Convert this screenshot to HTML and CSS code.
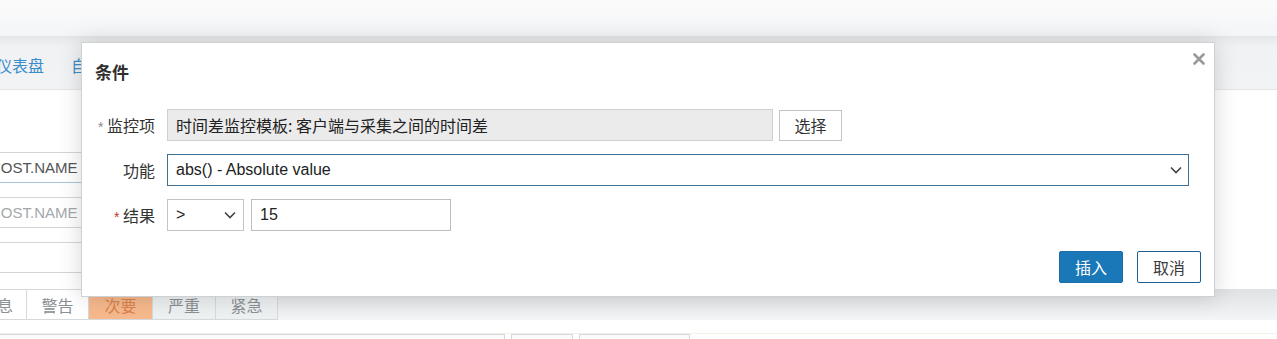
FILE: index.html
```html
<!DOCTYPE html>
<html lang="zh-CN">
<head>
<meta charset="utf-8">
<title>条件</title>
<link rel="stylesheet" href="styles.css">
</head>
<body>
<div class="page">
  <div class="topbar"></div>
  <nav class="nav">
    <a class="nav-link first">仪表盘</a>
    <a class="nav-link second">自</a>
  </nav>
  <main class="content">
    <div class="bg-field dark">HOST.NAME</div>
    <div class="bg-field light">HOST.NAME</div>
    <div class="bg-field"></div>
    <div class="tabs">
      <span class="tab t-info">信息</span>
      <span class="tab t-warn">警告</span>
      <span class="tab t-avg">次要</span>
      <span class="tab t-high">严重</span>
      <span class="tab t-dis">紧急</span>
      <span class="tab-rest"></span>
    </div>
    <div class="bottom-row">
      <span class="box b1"></span>
      <span class="box b2"></span>
      <span class="box b3"></span>
    </div>
  </main>
</div>

<div class="dialog">
  <div class="dialog-head">
    <h2 class="dialog-title">条件</h2>
    <span class="close">
      <svg width="12" height="12" viewBox="0 0 12 12"><path d="M1.5 1.5 L10.5 10.5 M10.5 1.5 L1.5 10.5" stroke="#9a9a9a" stroke-width="2.6" stroke-linecap="round"/></svg>
    </span>
  </div>
  <div class="form">
    <div class="row">
      <label class="lbl"><span class="ast grey">*</span> 监控项</label>
      <div class="ctl item-input">时间差监控模板: 客户端与采集之间的时间差</div>
      <button class="btn-sel">选择</button>
    </div>
    <div class="row">
      <label class="lbl">功能</label>
      <div class="ctl select func">
        <span class="latin">abs() - Absolute value</span>
        <svg class="chev" width="12" height="8" viewBox="0 0 12 8"><path d="M1 1.5 L6 6.5 L11 1.5" fill="none" stroke="#444" stroke-width="1.6"/></svg>
      </div>
    </div>
    <div class="row">
      <label class="lbl"><span class="ast red">*</span> 结果</label>
      <div class="ctl select op">
        <span class="latin">&gt;</span>
        <svg class="chev" width="12" height="8" viewBox="0 0 12 8"><path d="M1 1.5 L6 6.5 L11 1.5" fill="none" stroke="#444" stroke-width="1.6"/></svg>
      </div>
      <div class="ctl val"><span class="latin">15</span></div>
    </div>
  </div>
  <div class="footer">
    <button class="btn primary">插入</button>
    <button class="btn secondary">取消</button>
  </div>
</div>
</body>
</html>
```
FILE: styles.css
```css
html, body {
  margin: 0;
  padding: 0;
}
body {
  width: 1277px;
  height: 339px;
  overflow: hidden;
  position: relative;
  background: #ffffff;
  font-family: "Liberation Sans", "Noto Sans CJK SC", sans-serif;
  color: #333;
}

/* ---------- background page ---------- */
.page {
  width: 1277px;
  height: 339px;
  overflow: hidden;
  display: flex;
  flex-direction: column;
}
.topbar {
  height: 36px;
  flex: none;
  background: linear-gradient(#fbfbfc, #f4f5f6);
}
.nav {
  height: 54px;
  flex: none;
  background: linear-gradient(#e4e5e6 0, #ebeced 5px, #f1f2f3 12px, #f2f3f4 100%);
  border-bottom: 1px solid #e3e5e6;
  box-sizing: border-box;
  display: flex;
  align-items: center;
  gap: 27px;
  font-family: "Noto Sans CJK SC", sans-serif;
  font-size: 16px;
  padding-top: 4px;
}
.nav-link {
  color: #3a8dc9;
  white-space: nowrap;
}
.nav-link.first {
  margin-left: -4px;
}
.content {
  flex: 1;
  background: #fff;
  padding-top: 62px;
  display: flex;
  flex-direction: column;
}
.bg-field {
  margin-left: -14px;
  width: 500px;
  height: 31px;
  box-sizing: border-box;
  border: 1px solid #d3d6d8;
  padding-left: 3px;
  font-size: 15px;
  line-height: 29px;
  color: #555;
  margin-bottom: 14px;
}
.bg-field.dark {
  border-bottom-color: #a9c3d6;
}
.bg-field.light {
  color: #a4a8ab;
}
.tabs {
  display: flex;
  height: 31px;
  margin-top: 2px;
  font-family: "Noto Sans CJK SC", sans-serif;
  font-size: 16px;
}
.tab {
  width: 62px;
  box-sizing: border-box;
  border: 1px solid #d6d9db;
  border-left: none;
  display: flex;
  align-items: center;
  justify-content: center;
  color: #8a8f93;
  flex: none;
  white-space: nowrap;
}
.t-info {
  width: 50px;
  margin-left: -23px;
  background: #fff;
  justify-content: flex-end;
  padding-right: 13px;
}
.t-warn { width: 62px; background: #fff; }
.t-avg { width: 64px; background: #f6b98d; color: #d9834f; }
.t-high { width: 63px; background: #eef1f2; }
.t-dis { width: 62px; background: #eef1f2; }
.tab-rest {
  flex: 1;
  background: linear-gradient(#dfe2e4, #f3f5f6);
}
.bottom-row {
  margin-top: 13px;
  display: flex;
  gap: 6px;
  height: 20px;
  border-top: 1px solid #f3f1e6;
}
.box {
  display: block;
  height: 20px;
  box-sizing: border-box;
  border: 1px solid #d6d9db;
  background: #fbfbfb;
}
.b1 { width: 510px; margin-left: -5px; }
.b2 { width: 62px; }
.b3 { width: 111px; }

/* ---------- dialog ---------- */
.dialog {
  position: absolute;
  left: 81px;
  top: 42px;
  width: 1134px;
  height: 255px;
  box-sizing: border-box;
  background: #fff;
  border: 1px solid #cdd1d4;
  box-shadow: 0 0 22px rgba(0, 0, 0, 0.16);
  font-family: "Noto Sans CJK SC", sans-serif;
}
.dialog-head {
  height: 53px;
  box-sizing: border-box;
  padding: 18px 0 0 13px;
  position: relative;
}
.dialog-title {
  margin: 0;
  font-size: 17px;
  line-height: 22px;
  font-weight: bold;
  color: #2f2f2f;
}
.close {
  position: absolute;
  right: 9px;
  top: 10px;
  width: 12px;
  height: 12px;
  display: block;
}
.close svg { display: block; }

.form {
  padding-top: 13px;
  display: flex;
  flex-direction: column;
  gap: 13px;
}
.row {
  display: flex;
  align-items: center;
  height: 32px;
}
.lbl {
  width: 73px;
  flex: none;
  text-align: right;
  margin-right: 12px;
  font-size: 16px;
  color: #333;
  white-space: nowrap;
}
.ast { font-family: "Liberation Sans", sans-serif; font-size: 14px; }
.ast.grey { color: #8a8a8a; }
.ast.red { color: #c0392b; }

.ctl {
  height: 32px;
  box-sizing: border-box;
  border: 1px solid #c4c4c4;
  background: #fff;
  display: flex;
  align-items: center;
  padding: 0 8px;
  font-size: 16px;
  color: #222;
  white-space: nowrap;
  flex: none;
}
.latin {
  font-family: "Liberation Sans", sans-serif;
  font-size: 16px;
}
.item-input {
  width: 606px;
  background: #ebebeb;
  border-color: #d0d0d0;
}
.btn-sel {
  margin-left: 6px;
  width: 63px;
  height: 31px;
  box-sizing: border-box;
  border: 1px solid #c4c4c4;
  background: #fff;
  font-family: "Noto Sans CJK SC", sans-serif;
  font-size: 16px;
  color: #333;
  padding: 0;
}
.select {
  justify-content: space-between;
  padding-right: 7px;
}
.func {
  width: 1022px;
  border-color: #3e7193;
  padding-right: 6px;
}
.op {
  width: 77px;
}
.val {
  margin-left: 7px;
  width: 200px;
  border-color: #bdbdbd;
}
.chev { display: block; }

.footer {
  margin-top: 20px;
  display: flex;
  justify-content: flex-end;
  gap: 14px;
  padding-right: 13px;
}
.btn {
  width: 64px;
  height: 32px;
  box-sizing: border-box;
  border-radius: 2px;
  font-family: "Noto Sans CJK SC", sans-serif;
  font-size: 16px;
  padding: 0;
}
.btn.primary {
  background: #1b78b8;
  border: 1px solid #1b6ea8;
  color: #fff;
}
.btn.secondary {
  background: #fff;
  border: 1px solid #1f5f8f;
  color: #3b3b3b;
}
```
